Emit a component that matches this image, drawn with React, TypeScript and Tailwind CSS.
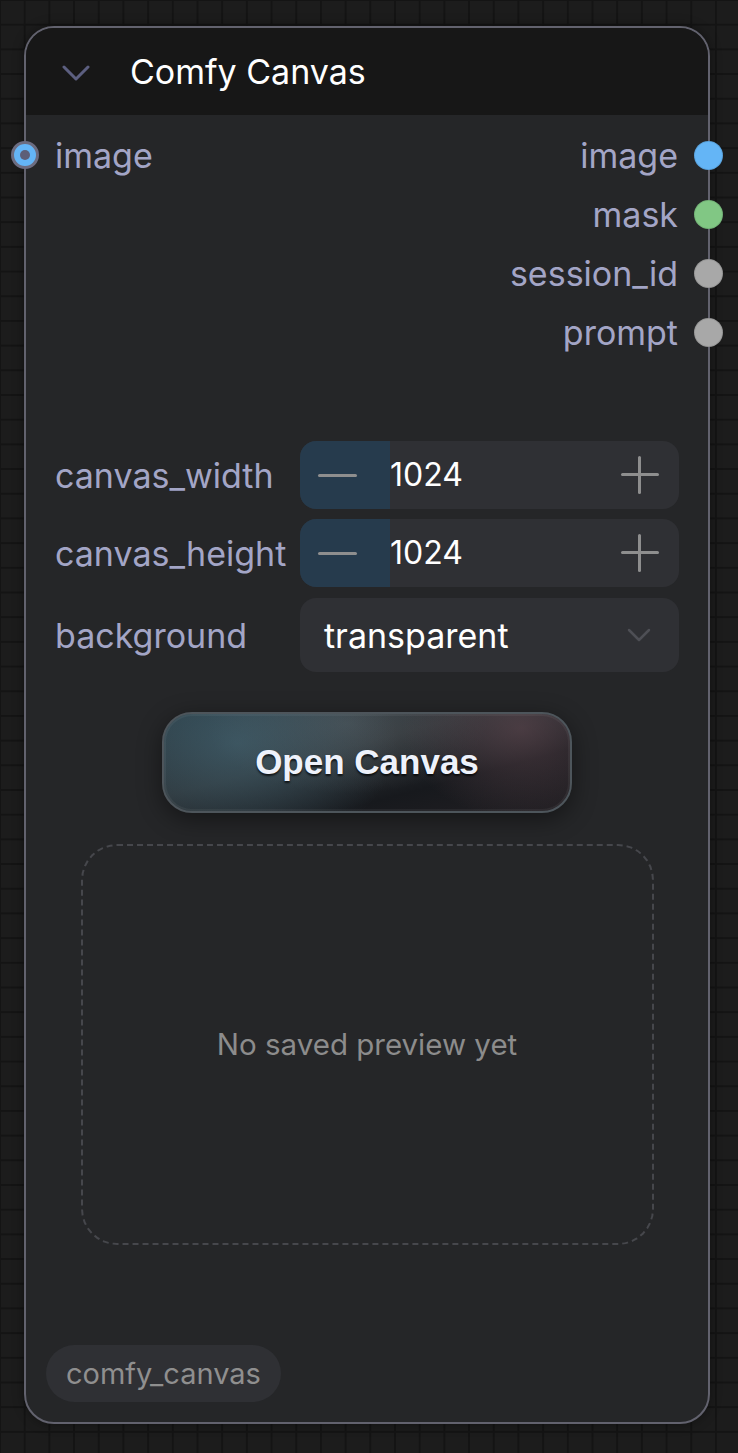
import React from 'react';

const inputs = [{ name: 'image', color: 'bg-[#64b5f6]' }];

const outputs = [
  { name: 'image', color: 'bg-[#64b5f6]' },
  { name: 'mask', color: 'bg-[#81c784]' },
  { name: 'session_id', color: 'bg-[#a8a8a8]' },
  { name: 'prompt', color: 'bg-[#a8a8a8]' },
];

const NumberWidget: React.FC<{ label: string; value: number }> = ({ label, value }) => (
  <div className="flex items-center h-[68px]">
    <span className="w-[245px] shrink-0 text-[34px] text-[#a3a5c6] whitespace-nowrap">{label}</span>
    <div className="flex items-center w-[379px] h-full rounded-[16px] bg-[#2f3034] overflow-hidden">
      <div className="flex items-center w-[90px] h-full pl-[18px] bg-[#263b4d]">
        <div className="w-[39px] h-[3px] rounded-full bg-[#8e8e8e]" />
      </div>
      <span className="flex-1 text-[32px] text-white leading-none">{value}</span>
      <div className="relative w-[38px] h-[38px] mr-[20px]">
        <div className="absolute left-0 top-[17px] w-[38px] h-[3px] rounded-full bg-[#8e8e8e]" />
        <div className="absolute top-0 left-[17px] w-[3px] h-[38px] rounded-full bg-[#8e8e8e]" />
      </div>
    </div>
  </div>
);

const App: React.FC = () => {
  return (
    <div
      className="w-[738px] min-h-[1453px] pt-[26px] pl-[24px] bg-[#1c1c1c] bg-[linear-gradient(to_right,#141414_2px,transparent_2px),linear-gradient(to_bottom,#141414_2px,transparent_2px)] bg-[size:24.7px_24.7px] bg-[position:-1px_-1px]"
      style={{ fontFamily: 'Inter, "Noto Sans", sans-serif' }}
    >
      <div className="relative flex flex-col w-[686px] h-[1398px] rounded-[30px] border-2 border-[#62626e] bg-[#252628] shadow-[0_0_12px_rgba(0,0,0,0.4)]">
        {/* Header */}
        <div className="flex items-center h-[87px] pl-[36px] rounded-t-[28px] bg-[#171717]">
          <svg width="28" height="18" viewBox="0 0 28 18" fill="none" className="mt-[2px]">
            <path d="M2 3 L14 15 L26 3" stroke="#5c5f80" strokeWidth="3" strokeLinecap="round" strokeLinejoin="round" />
          </svg>
          <span className="ml-[40px] text-[34px] text-white leading-none">Comfy Canvas</span>
        </div>

        {/* Slots */}
        <div className="flex flex-col pt-[11px]">
          {outputs.map((o, i) => (
            <div key={o.name} className="relative flex items-center h-[59px]">
              {inputs[i] && (
                <>
                  <div className="absolute left-[-15px] top-[15px] w-[28px] h-[28px] rounded-full border-[3px] border-[#6c6c80] bg-[#64b5f6] flex items-center justify-center">
                    <div className="w-[10px] h-[10px] rounded-full bg-[#5d5f78]" />
                  </div>
                  <span className="absolute left-[29px] text-[34px] text-[#a3a5c6]">{inputs[i].name}</span>
                </>
              )}
              <span className="ml-auto mr-[30px] text-[34px] text-[#a3a5c6]">{o.name}</span>
              <div className={`absolute right-[-15px] top-[15px] w-[29px] h-[29px] rounded-full ${o.color} border border-black/10`} />
            </div>
          ))}
        </div>

        {/* Widgets */}
        <div className="flex flex-col gap-[10px] mt-[79px] pl-[29px]">
          <NumberWidget label="canvas_width" value={1024} />
          <NumberWidget label="canvas_height" value={1024} />
          <div className="flex items-center h-[74px] mt-[1px]">
            <span className="w-[245px] shrink-0 text-[34px] text-[#a3a5c6]">background</span>
            <div className="flex items-center w-[379px] h-full rounded-[16px] bg-[#2f3034] pl-[24px] pr-[28px]">
              <span className="flex-1 text-[34px] text-white">transparent</span>
              <svg width="24" height="14" viewBox="0 0 24 14" fill="none">
                <path d="M2 2 L12 12 L22 2" stroke="#4e4f55" strokeWidth="2.5" strokeLinecap="round" strokeLinejoin="round" />
              </svg>
            </div>
          </div>
        </div>

        {/* Button */}
        <div className="flex justify-center mt-[40px]">
          <button
            className="w-[410px] h-[101px] rounded-[30px] border-2 border-[#4d555b] bg-[radial-gradient(160px_110px_at_18%_30%,rgba(70,105,120,0.6),transparent),radial-gradient(120px_90px_at_88%_15%,rgba(100,74,82,0.6),transparent),radial-gradient(140px_70px_at_45%_10%,rgba(100,104,108,0.45),transparent),linear-gradient(165deg,#2a3a42_0%,#2c3236_40%,#17191d_70%,#221f23_100%)] shadow-[0_6px_24px_rgba(0,0,0,0.45),inset_0_0_0_2px_rgba(255,255,255,0.05)] text-[35px] font-bold text-[#eef2fb] [text-shadow:0_2px_2px_rgba(0,0,0,0.7)]"
            style={{ fontFamily: '"Liberation Sans", Arial, sans-serif' }}
          >
            Open Canvas
          </button>
        </div>

        {/* Preview */}
        <div className="flex justify-center mt-[31px]">
          <div className="flex items-center justify-center w-[573px] h-[401px] rounded-[36px] border-2 border-dashed border-[#46474c]">
            <span className="text-[29.5px] text-[#8c8c8c]">No saved preview yet</span>
          </div>
        </div>

        {/* Badge */}
        <div className="mt-auto mb-[20px] ml-[20px]">
          <span className="inline-flex items-center h-[57px] px-[20px] rounded-full bg-[#2f3034] text-[29px] text-[#8f8f8f]">
            comfy_canvas
          </span>
        </div>
      </div>
    </div>
  );
};

export default App;
